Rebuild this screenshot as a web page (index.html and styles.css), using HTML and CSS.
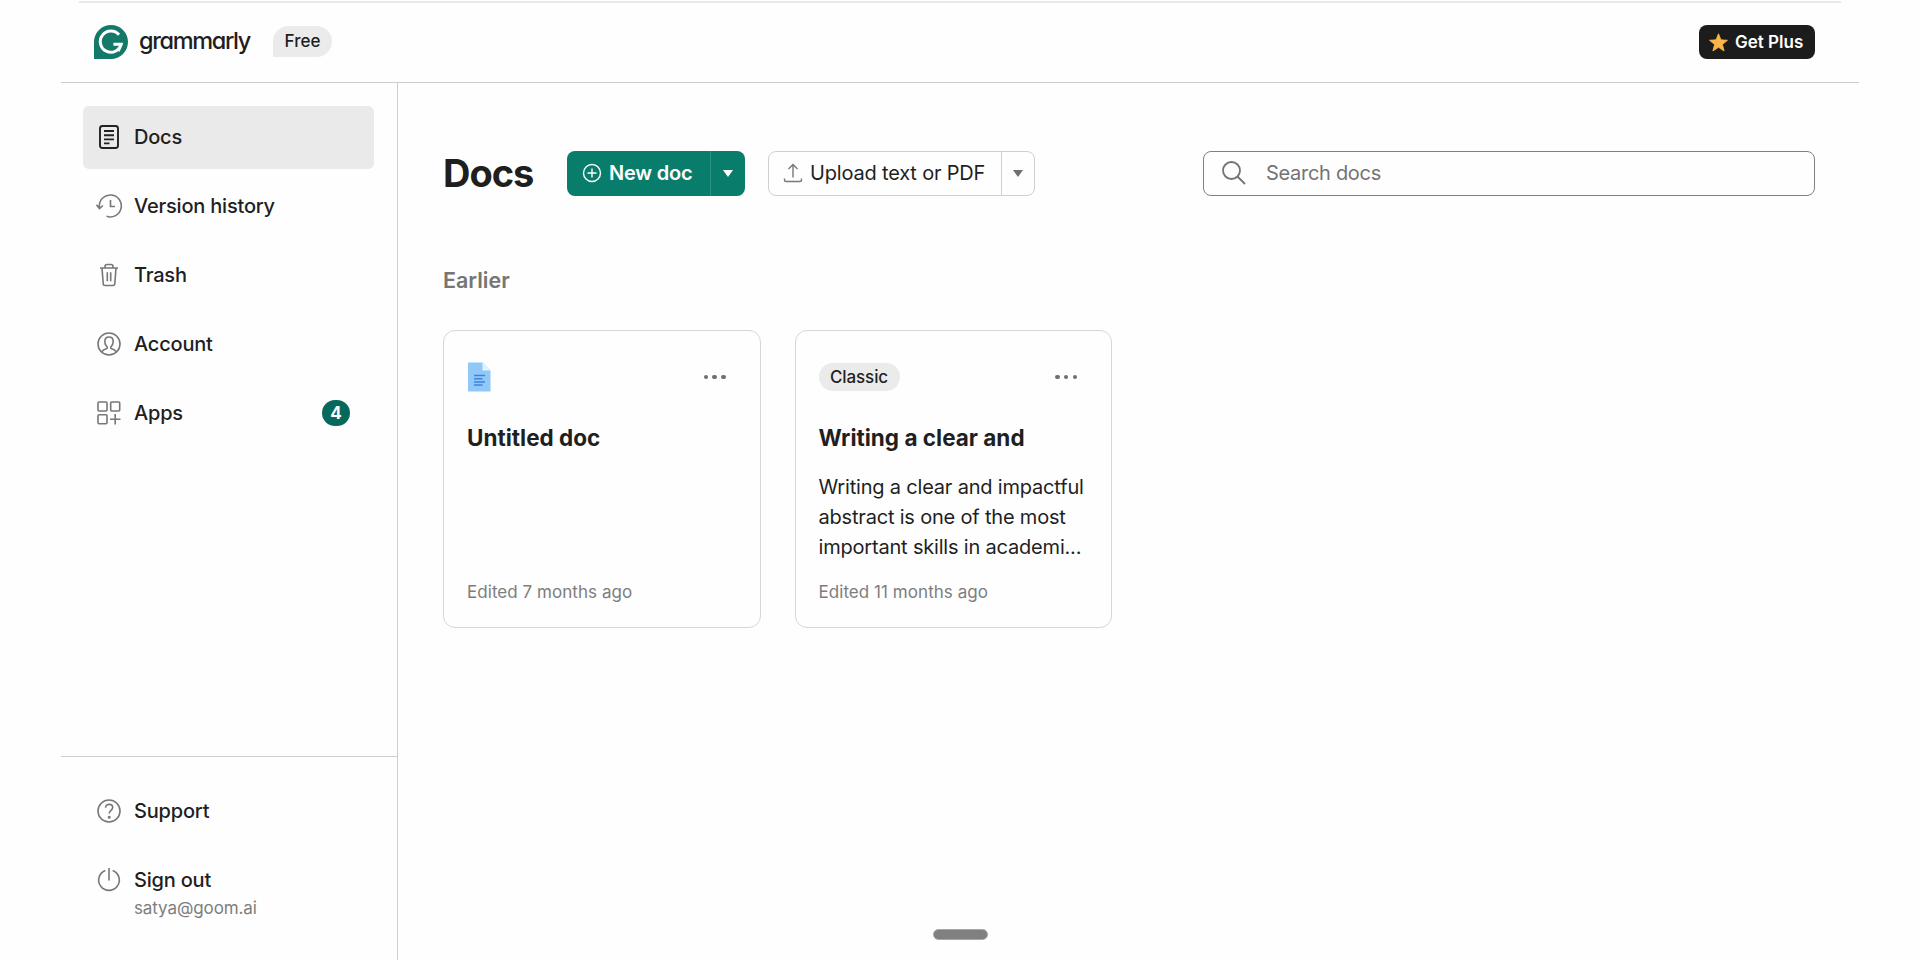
FILE: index.html
```html
<!DOCTYPE html>
<html lang="en">
<head>
    <meta charset="UTF-8">
    <meta name="viewport" content="width=device-width, initial-scale=1.0">
    <title>Docs - Grammarly</title>
    <link rel="stylesheet" href="styles.css">
</head>
<body>
    <div class="page">
        <div class="top-line"></div>

        <header class="header">
            <svg class="logo" width="34" height="34" viewBox="0 0 34 34" fill="none">
                <path d="M17 0a17 17 0 1 1 0 34H0V17A17 17 0 0 1 17 0z" fill="#15796a"/>
                <path d="M25 9.8A10.6 10.6 0 1 0 27.2 19.2H19.4M27.4 19.2L24.2 26" stroke="#fff" stroke-width="3"/>
            </svg>
            <span class="wordmark">grammarly</span>
            <span class="plan">Free</span>
            <button class="get-plus">
                <svg width="19" height="19" viewBox="0 0 18 18"><path d="M9 .7l2.3 5.8 6.2.4-4.8 4 1.6 6.1L9 13.6 3.7 17l1.6-6.1-4.8-4 6.2-.4z" fill="#fdb448" stroke="#fdb448" stroke-width=".8" stroke-linejoin="round"/></svg>
                <span>Get Plus</span>
            </button>
        </header>

        <div class="layout">
            <aside class="sidebar">
                <nav class="menu">
                    <a class="item active">
                        <svg class="icon" width="26" height="26" viewBox="0 0 26 26"><rect x="4" y="2" width="18" height="22" rx="2.5"/><path d="M8 7h10M8 11.2h10M8 15.4h10M8 19.4h5.5"/></svg>
                        <span class="label">Docs</span>
                    </a>
                    <a class="item">
                        <svg class="icon" width="26" height="26" viewBox="0 0 26 26"><path d="M3.3 15.2V13A11 11 0 1 1 10.6 23.3M.5 11.8l3 3.7 3.4-3M14.5 7v6.5H19"/></svg>
                        <span class="label">Version history</span>
                    </a>
                    <a class="item">
                        <svg class="icon" width="26" height="26" viewBox="0 0 26 26"><path d="M4 6h18M9 6V4.5a2 2 0 0 1 2-2h4a2 2 0 0 1 2 2V6M6 6l1.2 15.5a2 2 0 0 0 2 2h7.6a2 2 0 0 0 2-2L20 6M11.3 10.2v9M14.7 10.2v9"/></svg>
                        <span class="label">Trash</span>
                    </a>
                    <a class="item">
                        <svg class="icon" width="26" height="26" viewBox="0 0 26 26"><circle cx="13" cy="13" r="11"/><path d="M5.5 21c1.2-1.7 2.900-2.800 5.300-3.500.6-.2.7-1.200.2-1.700C9.500 14.300 8.800 12.500 8.800 10.500 8.800 7.700 10.500 6 13 6s4.200 1.700 4.200 4.500c0 2-.7 3.800-2.200 5.300-.5.5-.4 1.500.2 1.700 2.400.7 4.100 1.800 5.300 3.500"/></svg>
                        <span class="label">Account</span>
                    </a>
                    <a class="item">
                        <svg class="icon" width="26" height="26" viewBox="0 0 26 26"><rect x="2" y="2" width="9" height="9" rx="1"/><rect x="14.7" y="2" width="9" height="9" rx="1"/><rect x="2" y="14.7" width="9" height="9" rx="1"/><path d="M19.2 14v10.500M14 19.200h10.500"/></svg>
                        <span class="label">Apps</span>
                        <span class="count">4</span>
                    </a>
                </nav>
                <div class="menu bottom">
                    <a class="item">
                        <svg class="icon" width="26" height="26" viewBox="0 0 26 26"><circle cx="13" cy="13" r="11"/><path d="M9.6 9.8C9.6 7.6 11 6.4 13.1 6.4s3.6 1.3 3.6 3.2c0 2.7-3.5 3-3.5 6"/><circle cx="13.2" cy="19.3" r=".7"/></svg>
                        <span class="label">Support</span>
                    </a>
                    <a class="item">
                        <svg class="icon" width="26" height="26" viewBox="0 0 26 26"><path d="M13 1v12.5M9.3 3.500a10.300 10.300 0 1 0 7.400 0"/></svg>
                        <span class="label">Sign out</span>
                    </a>
                    <div class="email">satya@goom.ai</div>
                </div>
            </aside>

            <main class="main">
                <div class="toolbar">
                    <h1>Docs</h1>
                    <div class="split primary">
                        <button class="action">
                            <svg width="20" height="20" viewBox="0 0 20 20"><circle cx="10" cy="10" r="8.5"/><path d="M10 5.5v9M5.5 10h9"/></svg>
                            <span>New doc</span>
                        </button>
                        <button class="toggle"><span class="caret"></span></button>
                    </div>
                    <div class="split secondary">
                        <button class="action">
                            <svg width="20" height="20" viewBox="0 0 20 20"><path d="M10 14.5V1.5M5.5 6L10 1.5 14.5 6M1.5 15.500v1.500q0 1.500 1.500 1.500h14q1.500 0 1.500-1.500v-1.500"/></svg>
                            <span>Upload text or PDF</span>
                        </button>
                        <button class="toggle"><span class="caret"></span></button>
                    </div>
                    <div class="search">
                        <svg width="26" height="26" viewBox="0 0 26 26"><circle cx="10.5" cy="10.5" r="8.5"/><path d="M16.5 16.5L24 24"/></svg>
                        <span>Search docs</span>
                    </div>
                </div>

                <h2>Earlier</h2>

                <div class="cards">
                    <article class="card">
                        <div class="card-top">
                            <svg width="24" height="30" viewBox="0 0 24 30"><path d="M1 .5h14.5l8 8v21H1z" fill="#90c8f8"/><path d="M15.5.5l8 8h-8z" fill="#e3f1fd"/><path d="M7 13.5h11M7 16.8h8.5M7 20h11M7 23h8.5" stroke="#3f83d8" stroke-width="1.6"/></svg>
                            <span class="dots"><i></i><i></i><i></i></span>
                        </div>
                        <h3>Untitled doc</h3>
                        <div class="edited">Edited 7 months ago</div>
                    </article>
                    <article class="card">
                        <div class="card-top">
                            <span class="chip">Classic</span>
                            <span class="dots"><i></i><i></i><i></i></span>
                        </div>
                        <h3>Writing a clear and</h3>
                        <p>Writing a clear and impactful<br>abstract is one of the most<br>important skills in academi...</p>
                        <div class="edited">Edited 11 months ago</div>
                    </article>
                </div>
            </main>
        </div>
    </div>

    <div class="handle"></div>
</body>
</html>
```
FILE: styles.css
```css
* {
    box-sizing: border-box;
}

body {
    margin: 0;
    height: 960px;
    overflow: hidden;
    background: #fefefe;
    color: #1f1f1f;
    font-family: Inter, "Liberation Sans", sans-serif;
}

h1, h2, h3, p {
    margin: 0;
}

button {
    font-family: inherit;
    border: none;
    background: none;
    padding: 0;
}

svg {
    flex: none;
    fill: none;
}

.page {
    width: 1798px;
    height: 960px;
    margin-left: 61px;
    padding-top: 1px;
    display: flex;
    flex-direction: column;
}

.top-line {
    height: 2px;
    margin: 0 18px;
    background: #e8e8e8;
}

.header {
    height: 80px;
    padding: 0 44px 1px 33px;
    display: flex;
    align-items: center;
    border-bottom: 1px solid #cecece;
}

.wordmark {
    margin: -3px 0 0 11px;
    width: 134px;
    font-size: 23.5px;
    font-weight: 500;
    letter-spacing: -1.35px;
    font-feature-settings: "cv11";
}

.plan {
    width: 59px;
    height: 31px;
    margin-top: -1px;
    line-height: 31px;
    text-align: center;
    font-size: 17px;
    font-weight: 500;
    background: #ebebeb;
    border-radius: 16px 16px 16px 0;
}

.get-plus {
    margin-left: auto;
    width: 116px;
    height: 34px;
    padding-left: 10px;
    display: flex;
    align-items: center;
    gap: 7px;
    background: #1c1c1c;
    color: #fff;
    border-radius: 8px;
    font-size: 17px;
    font-weight: 600;
}

.layout {
    flex: 1;
    display: flex;
}

.sidebar {
    width: 337px;
    border-right: 1px solid #cecece;
    display: flex;
    flex-direction: column;
}

.menu {
    padding: 22.5px 23px 0 22px;
    display: flex;
    flex-direction: column;
    gap: 6px;
    flex: 1;
}

.menu.bottom {
    flex: none;
    height: 204px;
    padding-top: 22.5px;
    border-top: 1px solid #cecece;
}

.item {
    height: 63px;
    padding: 0 24px 0 12.5px;
    display: flex;
    align-items: center;
    font-size: 20px;
    font-weight: 500;
    letter-spacing: -0.2px;
}

.item.active {
    background: #eaeaea;
    border-radius: 6px;
}

.icon {
    stroke: #777;
    stroke-width: 1.6;
}

.active .icon {
    stroke: #222;
    stroke-width: 1.9;
}

.label {
    margin-left: 12.5px;
}

.count {
    margin-left: auto;
    width: 28px;
    height: 26px;
    line-height: 26px;
    border-radius: 13px;
    background: #06695b;
    color: #fff;
    text-align: center;
    font-size: 17px;
    font-weight: 700;
}

.email {
    margin: -20.5px 0 0 51px;
    color: #7d7d7d;
    font-size: 17px;
    line-height: 22px;
    letter-spacing: -0.1px;
}

.main {
    flex: 1;
    padding: 67.5px 44px 0 45px;
}

.toolbar {
    height: 45px;
    display: flex;
    align-items: center;
}

h1 {
    width: 124px;
    font-size: 38px;
    line-height: 45px;
    font-weight: 700;
    letter-spacing: -1px;
}

.split {
    display: flex;
    height: 45px;
    border-radius: 8px;
}

.split .action {
    display: flex;
    align-items: center;
    gap: 7px;
    font-size: 20px;
    letter-spacing: -0.18px;
    color: inherit;
}

.split .toggle {
    flex: 1;
    display: flex;
    align-items: center;
    justify-content: center;
}

.caret {
    border: 5px solid transparent;
    border-top: 7px solid;
    border-bottom: 0;
}

.primary {
    width: 178px;
    background: #087d6c;
    color: #fff;
}

.primary .action {
    width: 144px;
    padding-left: 15px;
    font-weight: 600;
    border-right: 1px solid #2b9283;
}

.primary svg {
    stroke: #fff;
    stroke-width: 1.4;
}

.primary .caret {
    color: #fff;
}

.secondary {
    margin-left: 23px;
    width: 267px;
    border: 1px solid #d0d0d0;
}

.secondary .action {
    width: 233px;
    padding-left: 14px;
    gap: 7px;
    border-right: 1px solid #d0d0d0;
}

.secondary svg {
    stroke: #777;
    stroke-width: 1.4;
}

.secondary .caret {
    color: #6f6f6f;
}

.search {
    margin-left: auto;
    width: 612px;
    height: 45px;
    padding-left: 17px;
    border: 1px solid #808080;
    border-radius: 8px;
    display: flex;
    align-items: center;
    gap: 19px;
    color: #737373;
    font-size: 20px;
    letter-spacing: -0.3px;
}

.search svg {
    stroke: #737373;
    stroke-width: 1.8;
}

h2 {
    margin-top: 70.5px;
    color: #757575;
    font-size: 21.5px;
    line-height: 28px;
    font-weight: 600;
}

.cards {
    margin-top: 36px;
    display: flex;
    gap: 34px;
}

.card {
    width: 317.5px;
    height: 298px;
    padding: 30px 23px 0;
    display: flex;
    flex-direction: column;
    border: 1px solid #d6d6d6;
    border-radius: 12px;
}

.card-top {
    height: 32px;
    display: flex;
    align-items: center;
    justify-content: space-between;
}

.chip {
    height: 28px;
    width: 81px;
    line-height: 28px;
    text-align: center;
    border-radius: 14px;
    background: #ebebeb;
    font-size: 17px;
    font-weight: 500;
    letter-spacing: -0.1px;
}

.dots {
    display: flex;
    gap: 4.3px;
    margin-right: 11px;
}

.dots i {
    width: 4.4px;
    height: 4.4px;
    border-radius: 50%;
    background: #6f6f6f;
}

h3 {
    margin-top: 31px;
    font-size: 22.5px;
    line-height: 28px;
    font-weight: 700;
}

.card p {
    margin-top: 20px;
    font-size: 20px;
    line-height: 30px;
    letter-spacing: -0.19px;
    white-space: nowrap;
}

.edited {
    margin-top: auto;
    margin-bottom: 24px;
    color: #7d7d7d;
    font-size: 17px;
    line-height: 22px;
    letter-spacing: 0.05px;
}

/* drag handle over the bottom edge */
.handle {
    position: absolute;
    left: 933px;
    top: 929px;
    width: 55px;
    height: 11px;
    border-radius: 6px;
    background: #808080;
    border: 1px solid #a8a8a8;
}
```
